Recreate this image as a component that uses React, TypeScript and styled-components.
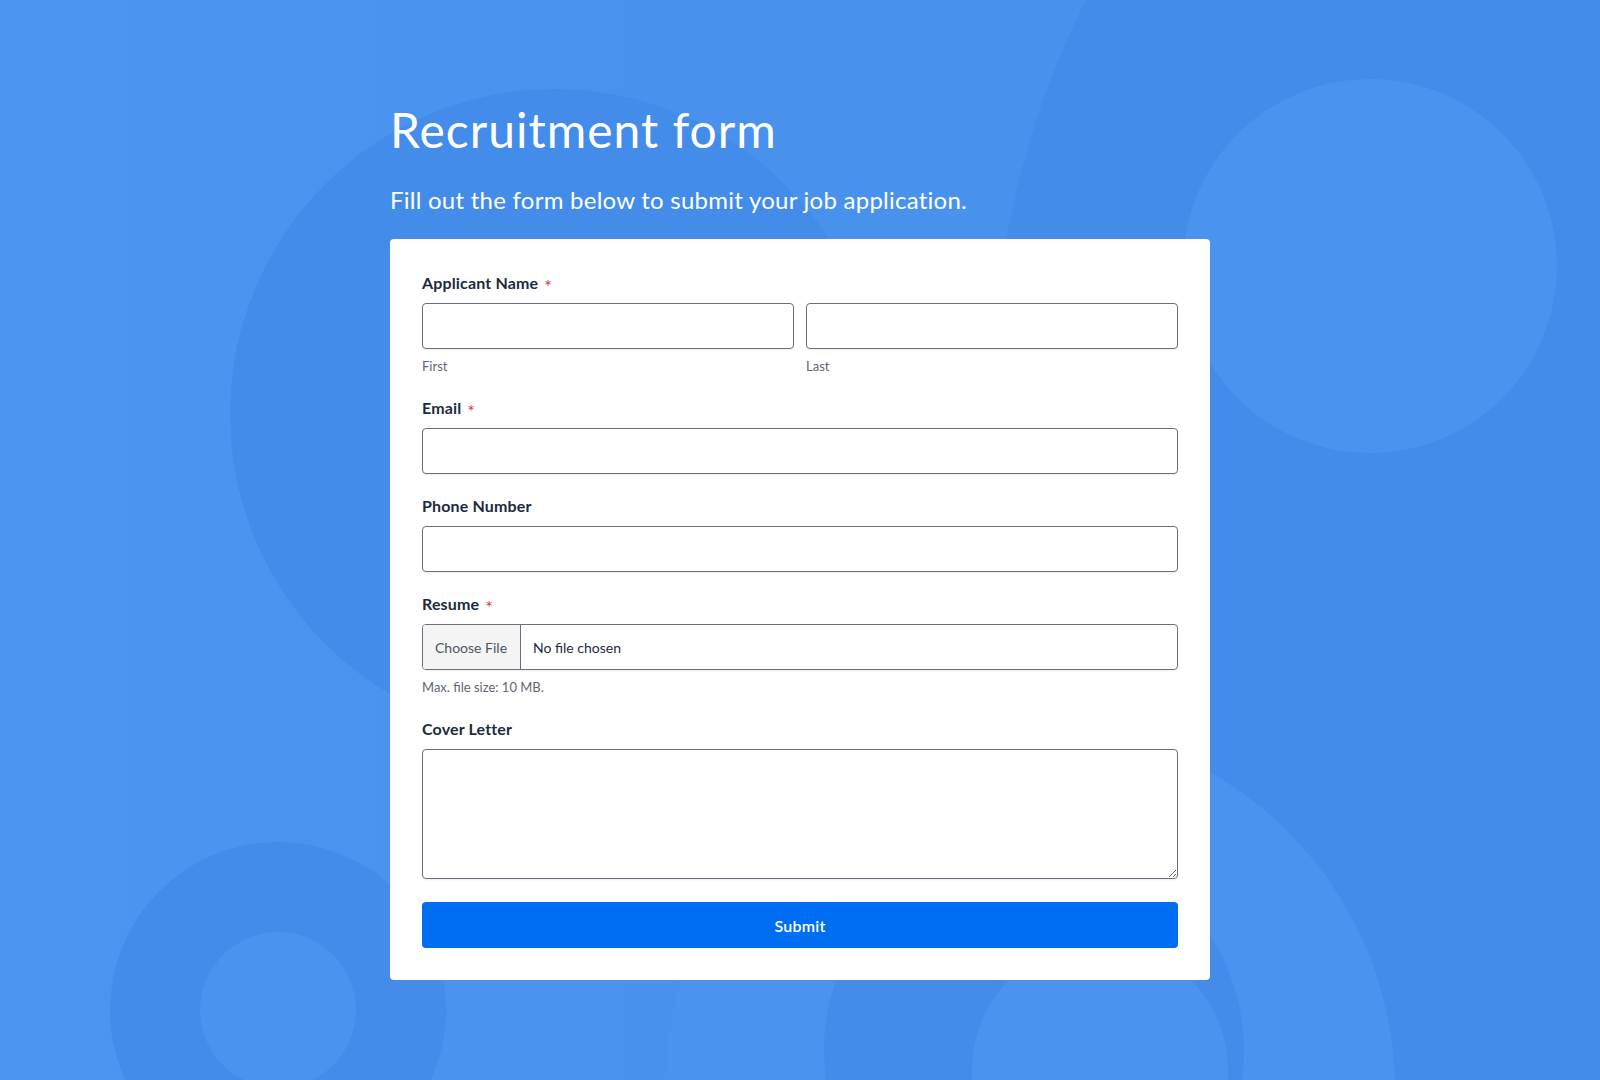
import styled, { createGlobalStyle } from "styled-components";

const GlobalStyle = createGlobalStyle`
  * { box-sizing: border-box; }
  html, body {
    margin: 0;
    padding: 0;
  }
  body {
    font-family: Lato, "Open Sans", "Liberation Sans", sans-serif;
    background: #4a94f0;
    -webkit-font-smoothing: antialiased;
  }
`;

const Page = styled.div`
  position: relative;
  min-height: 100vh;
  overflow: hidden;
  background: #4a94f0;
`;

const Backdrop = styled.svg`
  position: absolute;
  inset: 0;
  width: 100%;
  height: 100%;
  z-index: 0;
`;

const Content = styled.main`
  position: relative;
  z-index: 1;
  width: 820px;
  margin: 0 auto;
  padding: 101px 0 100px;
`;

const Title = styled.h1`
  margin: 0;
  font-size: 48px;
  line-height: 58px;
  font-weight: 400;
  letter-spacing: 1px;
  color: #ffffff;
`;

const Subtitle = styled.p`
  margin: 26px 0 0;
  font-size: 24px;
  line-height: 29px;
  font-weight: 400;
  letter-spacing: 0.25px;
  color: #ffffff;
`;

const Card = styled.form`
  margin-top: 25px;
  background: #ffffff;
  border-radius: 4px;
  padding: 32px;
  display: flex;
  flex-direction: column;
  gap: 20px;
`;

const Field = styled.div`
  display: flex;
  flex-direction: column;
`;

const Label = styled.label`
  display: block;
  font-size: 16px;
  line-height: 24px;
  font-weight: 700;
  letter-spacing: 0.15px;
  color: #1c2b3d;
  margin-bottom: 8px;
`;

const Required = styled.span`
  color: #d63638;
  font-size: 18px;
  line-height: 0;
  font-weight: 400;
  margin-left: 6px;
  vertical-align: -4px;
`;

const Split = styled.div`
  display: grid;
  grid-template-columns: 1fr 1fr;
  gap: 12px;
`;

const Column = styled.div`
  display: flex;
  flex-direction: column;
`;

const TextInput = styled.input`
  width: 100%;
  height: 46px;
  border: 1px solid #69707d;
  border-radius: 4px;
  padding: 0 12px;
  font: inherit;
  font-size: 16px;
  color: #1c2b3d;
  background: #ffffff;
  box-shadow: 0 1px 2px rgba(16, 24, 40, 0.08);
  outline: none;
`;

const Hint = styled.span`
  margin-top: 8px;
  font-size: 13px;
  line-height: 19px;
  color: #5f6672;
`;

const FileBox = styled.label`
  display: flex;
  align-items: stretch;
  height: 46px;
  border: 1px solid #69707d;
  border-radius: 4px;
  overflow: hidden;
  box-shadow: 0 1px 2px rgba(16, 24, 40, 0.08);
  cursor: pointer;

  input {
    display: none;
  }
`;

const ChooseButton = styled.span`
  display: flex;
  align-items: center;
  padding: 0 13px 0 12px;
  background: #f4f4f5;
  border-right: 1px solid #69707d;
  font-size: 14px;
  color: #4b5563;
`;

const FileName = styled.span`
  display: flex;
  align-items: center;
  padding-left: 12px;
  font-size: 14px;
  color: #1c2b3d;
`;

const TextArea = styled.textarea`
  width: 100%;
  height: 130px;
  border: 1px solid #69707d;
  border-radius: 4px;
  padding: 12px;
  font: inherit;
  font-size: 16px;
  color: #1c2b3d;
  box-shadow: 0 1px 2px rgba(16, 24, 40, 0.08);
  outline: none;
  display: block;
`;

const Submit = styled.button`
  margin-top: 3px;
  height: 46px;
  border: none;
  border-radius: 4px;
  background: #006ef2;
  color: #ffffff;
  font: inherit;
  font-size: 16px;
  font-weight: 600;
  letter-spacing: 0.2px;
  cursor: pointer;
`;

const DARK = "#438cea";
const LIGHT = "#4a94f0";

function Shapes() {
  return (
    <Backdrop viewBox="0 0 1600 1080" preserveAspectRatio="xMidYMid slice" aria-hidden="true">
      <defs>
        <linearGradient id="sheen" x1="0" x2="1" y1="0" y2="0">
          <stop offset="0" stopColor="#4c96f2" />
          <stop offset="0.5" stopColor="#4892ee" />
          <stop offset="1" stopColor="#4993ef" />
        </linearGradient>
      </defs>
      <rect width="1600" height="1080" fill="url(#sheen)" />
      <circle cx="555" cy="414" r="325" fill={DARK} />
      <ellipse cx="1470" cy="420" rx="480" ry="700" fill={DARK} />
      <circle cx="1370" cy="266" r="187" fill={LIGHT} />
      <circle cx="1030" cy="1090" r="365" fill={LIGHT} />
      <circle cx="1034" cy="1050" r="210" fill={DARK} />
      <circle cx="1100" cy="1070" r="128" fill={LIGHT} />
      <circle cx="278" cy="1010" r="168" fill={DARK} />
      <circle cx="278" cy="1010" r="78" fill={LIGHT} />
    </Backdrop>
  );
}

export default function App() {
  return (
    <>
      <GlobalStyle />
      <Page>
        <Shapes />
        <Content>
          <Title>Recruitment form</Title>
          <Subtitle>Fill out the form below to submit your job application.</Subtitle>
          <Card onSubmit={(e) => e.preventDefault()}>
            <Field>
              <Label htmlFor="first-name">
                Applicant Name<Required>*</Required>
              </Label>
              <Split>
                <Column>
                  <TextInput id="first-name" type="text" />
                  <Hint>First</Hint>
                </Column>
                <Column>
                  <TextInput id="last-name" type="text" />
                  <Hint>Last</Hint>
                </Column>
              </Split>
            </Field>
            <Field>
              <Label htmlFor="email">
                Email<Required>*</Required>
              </Label>
              <TextInput id="email" type="email" />
            </Field>
            <Field>
              <Label htmlFor="phone">Phone Number</Label>
              <TextInput id="phone" type="tel" />
            </Field>
            <Field>
              <Label htmlFor="resume">
                Resume<Required>*</Required>
              </Label>
              <FileBox>
                <input id="resume" type="file" />
                <ChooseButton>Choose File</ChooseButton>
                <FileName>No file chosen</FileName>
              </FileBox>
              <Hint>Max. file size: 10 MB.</Hint>
            </Field>
            <Field>
              <Label htmlFor="cover">Cover Letter</Label>
              <TextArea id="cover" />
            </Field>
            <Submit type="submit">Submit</Submit>
          </Card>
        </Content>
      </Page>
    </>
  );
}
